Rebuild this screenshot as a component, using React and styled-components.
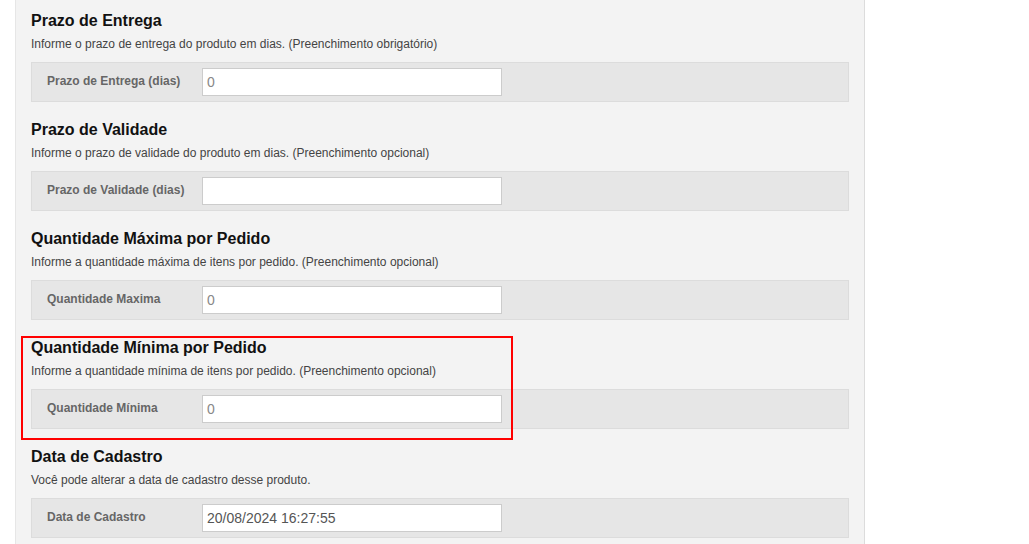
import React from 'react';
import styled, { createGlobalStyle } from 'styled-components';

const GlobalStyle = createGlobalStyle`
    body {
        margin: 0;
        background: #ffffff;
        font-family: "Liberation Sans", Arial, sans-serif;
    }
`

const Panel = styled.div`
    margin-left: 15px;
    width: 850px;
    background: #f3f3f3;
    border-left: 1px solid #e6e6e6;
    border-right: 1px solid #dcdcdc;
    padding: 12px 15px 40px 15px;
    box-sizing: border-box;
    min-height: 600px;
`

const Section = styled.div`
    position: relative;
    margin-bottom: 19px;
`

const Highlight = styled.div`
    position: absolute;
    left: -10px;
    top: -3px;
    width: 492px;
    height: 104px;
    border: 2px solid #ff0000;
    box-sizing: border-box;
    pointer-events: none;
`

const Title = styled.h3`
    margin: 0;
    font-size: 16px;
    line-height: 18px;
    font-weight: bold;
    color: #111;
`

const Help = styled.p`
    margin: 7px 0 0 0;
    font-size: 12px;
    line-height: 14px;
    color: #444;
`

const Row = styled.div`
    display: flex;
    align-items: center;
    margin-top: 11px;
    padding: 5px 15px;
    background: #e6e6e6;
    border: 1px solid #dcdcdc;
`

const Label = styled.label`
    width: 155px;
    flex-shrink: 0;
    font-size: 12px;
    font-weight: bold;
    color: #666;
    margin-bottom: 2px;
`

const Input = styled.input`
    width: 300px;
    height: 28px;
    box-sizing: border-box;
    border: 1px solid #cccccc;
    background: #fff;
    padding: 0 4px;
    font-family: "Liberation Sans", Arial, sans-serif;
    font-size: 14px;
    color: ${p => (p.$muted ? '#888' : '#555')};
    outline: none;
`

const fields = [
    {
        title: 'Prazo de Entrega',
        help: 'Informe o prazo de entrega do produto em dias. (Preenchimento obrigatório)',
        label: 'Prazo de Entrega (dias)',
        value: '0',
        muted: true
    },
    {
        title: 'Prazo de Validade',
        help: 'Informe o prazo de validade do produto em dias. (Preenchimento opcional)',
        label: 'Prazo de Validade (dias)',
        value: '',
        muted: true
    },
    {
        title: 'Quantidade Máxima por Pedido',
        help: 'Informe a quantidade máxima de itens por pedido. (Preenchimento opcional)',
        label: 'Quantidade Maxima',
        value: '0',
        muted: true
    },
    {
        title: 'Quantidade Mínima por Pedido',
        help: 'Informe a quantidade mínima de itens por pedido. (Preenchimento opcional)',
        label: 'Quantidade Mínima',
        value: '0',
        muted: true,
        highlight: true
    },
    {
        title: 'Data de Cadastro',
        help: 'Você pode alterar a data de cadastro desse produto.',
        label: 'Data de Cadastro',
        value: '20/08/2024 16:27:55',
        muted: false
    }
];

export default function App() {
    return (
        <>
            <GlobalStyle />
            <Panel>
                {fields.map((f) => (
                    <Section key={f.title}>
                        {f.highlight && <Highlight />}
                        <Title>{f.title}</Title>
                        <Help>{f.help}</Help>
                        <Row>
                            <Label>{f.label}</Label>
                            <Input $muted={f.muted} defaultValue={f.value} />
                        </Row>
                    </Section>
                ))}
            </Panel>
        </>
    );
}
